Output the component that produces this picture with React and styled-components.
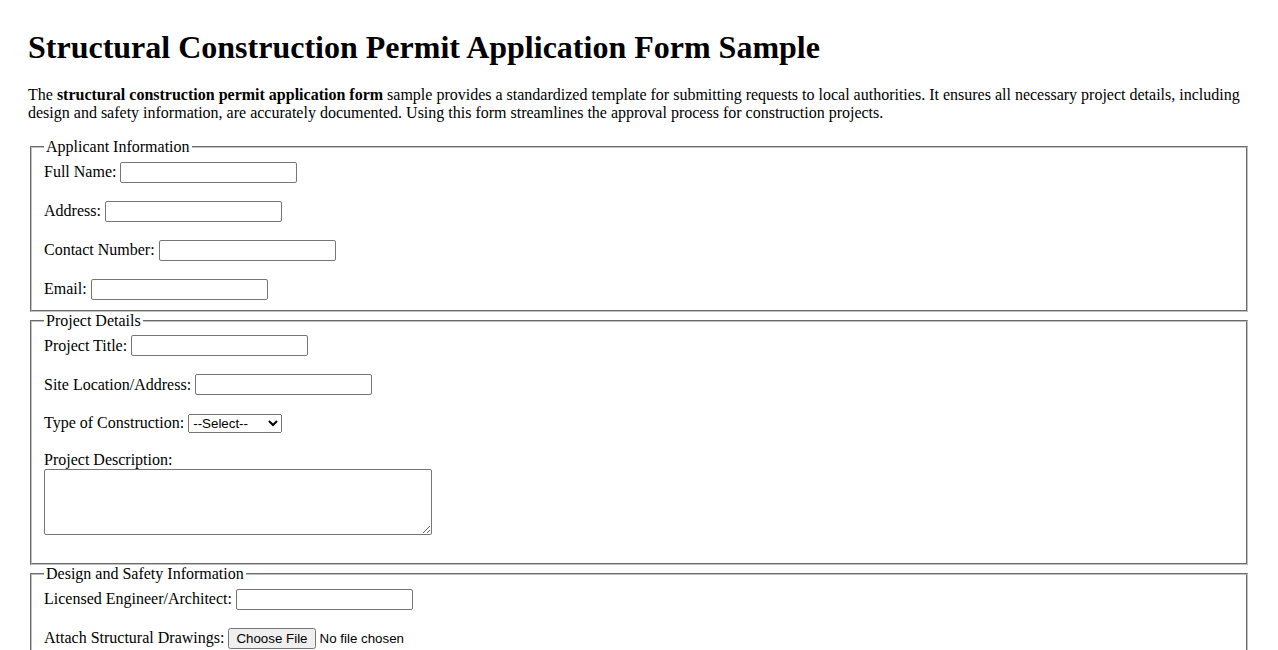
import React from 'react';
import styled, { createGlobalStyle } from 'styled-components';

const GlobalStyle = createGlobalStyle`
    body {
        margin: 0;
        background: #fff;
        color: #000;
        font-family: "Liberation Serif", "Times New Roman", serif;
        font-size: 16px;
    }
`;

const Page = styled.div`
    padding: 8px 28px 20px;
`;

const Title = styled.h1`
    font-size: 32px;
    font-weight: bold;
    margin: 21px 0 20px;
`;

const Intro = styled.p`
    margin: 0 0 16px;
`;

const Fieldset = styled.fieldset`
    margin: 0 2px;
    border: 2px groove #c0c0c0;
    padding: 0.35em 0.75em 0.625em;
    min-width: 0;
`;

const Legend = styled.legend`
    padding: 0 2px;
`;

const Row = styled.div`
    display: flex;
    align-items: center;
    gap: 4px;
    height: ${p => p.$h || 21}px;
    margin-bottom: ${p => (p.$gap !== undefined ? p.$gap : 18)}px;
    white-space: nowrap;
`;

const Block = styled.div`
    display: flex;
    flex-direction: column;
    align-items: flex-start;
    margin-bottom: ${p => p.$gap || 0}px;
`;

const TextInput = styled.input`
    box-sizing: border-box;
    width: 177px;
    height: 21px;
    padding: 1px 2px;
    border: 1px solid #767676;
    border-radius: 2px;
    font-family: "Liberation Sans", Arial, sans-serif;
    font-size: 13.333px;
`;

const Select = styled.select`
    width: 94px;
    height: 19px;
    font-family: "Liberation Sans", Arial, sans-serif;
    font-size: 13.333px;
`;

const TextArea = styled.textarea`
    box-sizing: border-box;
    width: 388px;
    height: 66px;
    border: 1px solid #767676;
    border-radius: 2px;
    font-family: "Liberation Mono", monospace;
    font-size: 13.333px;
    resize: both;
`;

const FileInput = styled.input`
    font-family: "Liberation Sans", Arial, sans-serif;
    font-size: 13.333px;
`;

const SubmitButton = styled.button`
    font-family: "Liberation Sans", Arial, sans-serif;
    font-size: 13.333px;
    margin-top: 12px;
`;

function App() {
    return (
        <Page>
            <GlobalStyle />
            <Title>Structural Construction Permit Application Form Sample</Title>
            <Intro>
                The <b>structural construction permit application form</b> sample provides a standardized template for
                submitting requests to local authorities. It ensures all necessary project details, including design and
                safety information, are accurately documented. Using this form streamlines the approval process for
                construction projects.
            </Intro>
            <form onSubmit={e => e.preventDefault()}>
                <Fieldset>
                    <Legend>Applicant Information</Legend>
                    <Row><label htmlFor="fullName">Full Name:</label><TextInput id="fullName" type="text" /></Row>
                    <Row><label htmlFor="address">Address:</label><TextInput id="address" type="text" /></Row>
                    <Row><label htmlFor="contact">Contact Number:</label><TextInput id="contact" type="tel" /></Row>
                    <Row $gap={0}><label htmlFor="email">Email:</label><TextInput id="email" type="email" /></Row>
                </Fieldset>
                <Fieldset>
                    <Legend>Project Details</Legend>
                    <Row><label htmlFor="title">Project Title:</label><TextInput id="title" type="text" /></Row>
                    <Row><label htmlFor="site">Site Location/Address:</label><TextInput id="site" type="text" /></Row>
                    <Row $h={20} $gap={18}>
                        <label htmlFor="type">Type of Construction:</label>
                        <Select id="type" defaultValue="">
                            <option value="">--Select--</option>
                            <option value="residential">Residential</option>
                            <option value="commercial">Commercial</option>
                            <option value="industrial">Industrial</option>
                        </Select>
                    </Row>
                    <Block $gap={18}>
                        <label htmlFor="desc">Project Description:</label>
                        <TextArea id="desc" />
                    </Block>
                </Fieldset>
                <Fieldset>
                    <Legend>Design and Safety Information</Legend>
                    <Row><label htmlFor="engineer">Licensed Engineer/Architect:</label><TextInput id="engineer" type="text" /></Row>
                    <Row><label htmlFor="drawings">Attach Structural Drawings:</label><FileInput id="drawings" type="file" /></Row>
                    <Row $gap={0}><label htmlFor="safety">Safety Compliance Certificate No.:</label><TextInput id="safety" type="text" /></Row>
                </Fieldset>
                <SubmitButton type="submit">Submit Application</SubmitButton>
            </form>
        </Page>
    );
}

export default App;
